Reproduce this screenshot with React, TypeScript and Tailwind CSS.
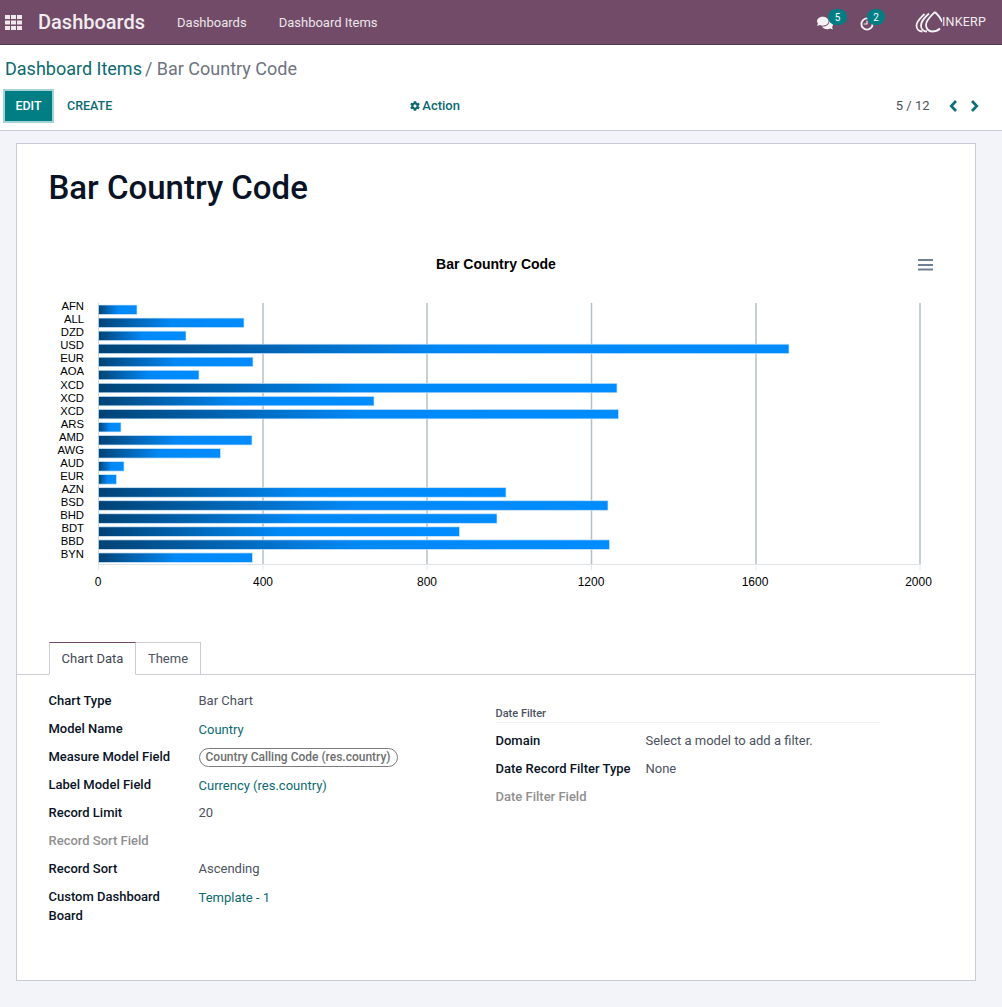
import React from "react";
import { FaCog, FaComments } from "react-icons/fa";

const bars: [string, number][] = [
  ["AFN", 137], ["ALL", 244], ["DZD", 186], ["USD", 789], ["EUR", 253],
  ["AOA", 199], ["XCD", 617], ["XCD", 374], ["XCD", 618.5], ["ARS", 121],
  ["AMD", 252], ["AWG", 220.5], ["AUD", 124], ["EUR", 116.5], ["AZN", 506],
  ["BSD", 608], ["BHD", 497], ["BDT", 459.5], ["BBD", 609.5], ["BYN", 252.5],
];
const ticks: [string, number, number][] = [
  ["0", 98.5, 98], ["400", 263, 263], ["800", 427, 427], ["1200", 591.5, 591], ["1600", 756, 755], ["2000", 920, 918.5],
];

function Chart() {
  return (
    <svg width="958" height="400" viewBox="17 240 958 400" className="block">
      <defs>
        <linearGradient id="barGrad" x1="0" y1="0" x2="1" y2="0">
          <stop offset="0" stopColor="#004375" />
          <stop offset="0.5" stopColor="#0088f5" />
          <stop offset="1" stopColor="#008cff" />
        </linearGradient>
      </defs>
      <text x="496" y="269" textAnchor="middle" fontFamily="'Liberation Sans', sans-serif" fontSize="14" fontWeight="700" fill="#000">Bar Country Code</text>
      <g stroke="#6e8192" strokeWidth="2">
        <line x1="918" x2="933" y1="260" y2="260" />
        <line x1="918" x2="933" y1="265" y2="265" />
        <line x1="918" x2="933" y1="269.500" y2="269.500" />
      </g>
      {ticks.map(([t, x], i) => (
        <line key={t} x1={x} x2={x} y1="303" y2="564" stroke={i === 0 ? "#ccd6dc" : "#b4c0c6"} strokeWidth={i === 0 ? 1 : 1.5} />
      ))}
      <line x1="98" x2="921" y1="564.500" y2="564.500" stroke="#dfe3e8" />
      {ticks.map(([t, x]) => (
        <line key={t} x1={x} x2={x} y1="564" y2="570" stroke="#e6e9ec" />
      ))}
      {bars.map(([label, end], i) => {
        const y = 305 + i * 13.05;
        const ty = (i < 6 ? 306 : 307) + 13 * i + 4;
        return (
          <g key={i}>
            <rect x="98.500" y={y} width={end - 98.5} height="9.500" fill="url(#barGrad)" stroke="#cfe6fb" strokeWidth="0.7" />
            <text x="84" y={ty} textAnchor="end" fontFamily="'Liberation Sans', sans-serif" fontSize="11.300" fill="#000">{label}</text>
          </g>
        );
      })}
      {ticks.map(([t, , lx]) => (
        <text key={t} x={lx} y="586" textAnchor="middle" fontFamily="'Liberation Sans', sans-serif" fontSize="12" fill="#000">{t}</text>
      ))}
    </svg>
  );
}

function Row({ label, value, kind, muted }: { label: string; value?: string; kind?: "link" | "pill"; muted?: boolean }) {
  return (
    <div className="flex min-h-[28px]">
      <div className={`w-[150px] shrink-0 pr-3 text-[13px] font-medium leading-[19px] ${muted ? "text-[#8f8f8f]" : "text-[#0a1326]"}`}>{label}</div>
      {kind === "pill" ? (
        <div className="mt-[1px] h-[19px] rounded-full border border-[#7c7c7c] px-[6px] text-[12px] font-medium leading-[17px] text-[#6e6e6e]">{value}</div>
      ) : (
        <div className={`text-[13px] leading-[19px] ${kind === "link" ? "pt-[1px] text-[#0c6a70]" : "text-[#4c5260]"}`}>{value}</div>
      )}
    </div>
  );
}

export default function App() {
  return (
    <div className="min-h-[1007px] bg-[#f3f4f9] font-['Roboto',sans-serif]">
      <header className="flex h-[45px] items-center border-b border-[#4f3b4a] bg-[#714b67] text-white">
        <svg width="17" height="15" viewBox="0 0 17 15" className="ml-[5px]" fill="#efe9ed">
          <rect x="0" y="0" width="5" height="4" /><rect x="6" y="0" width="5" height="4" /><rect x="12" y="0" width="5" height="4" />
          <rect x="0" y="5.500" width="5" height="4" /><rect x="6" y="5.500" width="5" height="4" /><rect x="12" y="5.500" width="5" height="4" />
          <rect x="0" y="11" width="5" height="4" /><rect x="6" y="11" width="5" height="4" /><rect x="12" y="11" width="5" height="4" />
        </svg>
        <span className="ml-[16px] text-[20px] font-medium leading-none text-[#f1ecef]">Dashboards</span>
        <span className="ml-[32px] pt-[1px] text-[13px] text-[#ece6ea]">Dashboards</span>
        <span className="ml-[32px] pt-[1px] text-[13px] text-[#ece6ea]">Dashboard Items</span>
        <div className="ml-auto flex items-center">
          <div className="relative h-[20px] w-[17px]">
            <FaComments className="absolute left-0 top-[3px] text-[16px] text-[#f4f0f3]" />
            <span className="absolute left-[11px] top-[-3px] flex h-[16px] w-[19px] items-center justify-center rounded-full bg-[#017e84] text-[10px] text-white">5</span>
          </div>
          <div className="relative ml-[26px] h-[20px] w-[15px]">
            <svg width="14" height="14" viewBox="0 0 15 15" className="absolute left-0 top-[5px]" fill="none" stroke="#f4f0f3" strokeWidth="2">
              <circle cx="7.500" cy="7.500" r="6" />
              <path d="M7.500 4v3.500H4" strokeWidth="1.300" />
            </svg>
            <span className="absolute left-[7px] top-[-3px] flex h-[16px] w-[18px] items-center justify-center rounded-full bg-[#017e84] text-[10px] text-white">2</span>
          </div>
          <div className="ml-[40px] mr-[16px] flex items-center">
            <svg width="27" height="22" viewBox="0 0 27 22" fill="none" stroke="#f6f2f5" strokeWidth="1.800">
              <path d="M20 1c-4 4-9 8-9 13 0 4 3 6.500 6 6.500" />
              <path d="M20 1c3 3 6 6 7 10" />
              <path d="M17 20.500c3 0 6-1 8-3" />
              <path d="M14 2.500C10 6 6 10 6 14.500c0 3.500 2.500 6 6 6" />
              <path d="M9.500 3C5.500 7 1.500 10 1.500 14.500c0 3.500 2.500 6 6 6" />
            </svg>
            <span className="text-[12.500px] leading-none tracking-[0.2px] text-[#f1ecef]">INKERP</span>
          </div>
        </div>
      </header>

      <div className="h-[86px] border-b border-[#c9ccd6] bg-white">
        <div className="pl-[5px] pt-[12px] text-[18px] leading-[24px] text-[#6e7480]">
          <span className="text-[#0c6a70]">Dashboard Items</span>
          <span className="ml-[-1.500px]"> / Bar Country Code</span>
        </div>
        <div className="mt-[8px] flex h-[34px] items-center">
          <button className="ml-[3px] flex h-[34px] w-[51px] items-center justify-center border-[2px] border-[#a5d3d5] bg-[#017e84] text-[12.500px] font-medium text-white">EDIT</button>
          <span className="ml-[13px] text-[12.500px] font-medium text-[#0c6a70]">CREATE</span>
          <div className="ml-[298px] flex items-center gap-[2px] text-[13px] font-medium text-[#0c6a70]">
            <FaCog className="text-[10px]" />
            <span>Action</span>
          </div>
          <div className="ml-auto flex items-center">
            <span className="text-[13px] text-[#4c5260]">5 / 12</span>
            <svg width="9" height="12" viewBox="0 0 9 12" fill="none" stroke="#0a6f78" strokeWidth="2.600" className="ml-[19.500px]">
              <path d="M7 1 2.200 6 7 11" />
            </svg>
            <svg width="9" height="12" viewBox="0 0 9 12" fill="none" stroke="#0a6f78" strokeWidth="2.600" className="ml-[12px] mr-[23px]">
              <path d="M2 1 6.800 6 2 11" />
            </svg>
          </div>
        </div>
      </div>

      <main className="ml-[16px] mr-[26px] mt-[12px] h-[838px] border border-[#c9ccd6] bg-white">
        <h1 className="pl-[31.500px] pt-[24px] text-[33px] font-medium leading-[40px] text-[#0a1326]">Bar Country Code</h1>
        <div className="mt-[32px]"><Chart /></div>
        <div className="mt-[2px] flex h-[33px] border-b border-[#c9ccd6] pl-[32px]">
          <div className="z-10 flex h-[33px] w-[87px] items-center justify-center border border-[#c9ccd6] border-t-[#714b67] border-b-white bg-white text-[13px] text-[#3f4654]">Chart Data</div>
          <div className="flex h-[33px] w-[65px] items-center justify-center border border-l-0 border-[#c9ccd6] text-[13px] text-[#4c5260]">Theme</div>
        </div>
        <div className="flex pl-[31.500px] pt-[16px]">
          <div className="w-[447px]">
            <Row label="Chart Type" value="Bar Chart" />
            <Row label="Model Name" value="Country" kind="link" />
            <Row label="Measure Model Field" value="Country Calling Code (res.country)" kind="pill" />
            <Row label="Label Model Field" value="Currency (res.country)" kind="link" />
            <Row label="Record Limit" value="20" />
            <Row label="Record Sort Field" muted />
            <Row label="Record Sort" value="Ascending" />
            <Row label="Custom Dashboard Board" value="Template - 1" kind="link" />
          </div>
          <div className="w-[384px]">
            <div className="mb-[8px] mt-[16px] h-[16px] border-b border-[#eef0f3] text-[11px] font-medium leading-[14px] text-[#4c5260]">Date Filter</div>
            <Row label="Domain" value="Select a model to add a filter." />
            <Row label="Date Record Filter Type" value="None" />
            <Row label="Date Filter Field" muted />
          </div>
        </div>
      </main>
    </div>
  );
}
